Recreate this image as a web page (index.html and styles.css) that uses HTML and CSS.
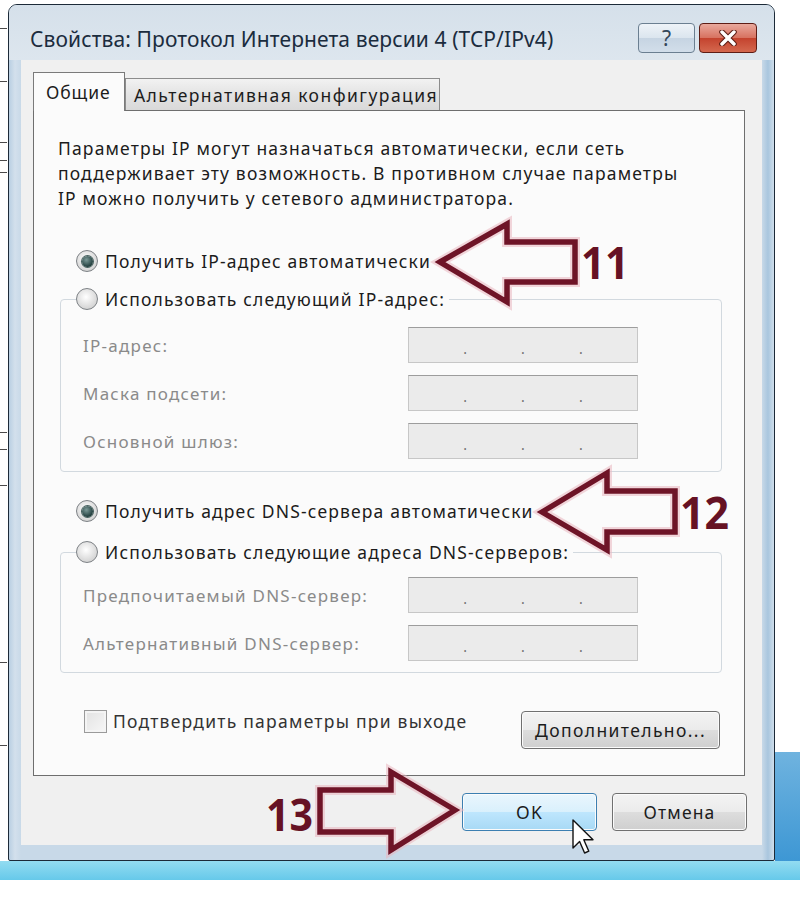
FILE: index.html
```html
<!DOCTYPE html>
<html lang="ru">
<head>
  <meta charset="UTF-8">
  <meta name="viewport" content="width=device-width, initial-scale=1.0">
  <title>Свойства: Протокол Интернета версии 4 (TCP/IPv4)</title>
  <link rel="stylesheet" href="styles.css">
</head>
<body>
  <div class="screen">
    <div class="window">
      <!-- Title bar -->
      <div class="titlebar">
        <span class="title">Свойства: Протокол Интернета версии 4 (TCP/IPv4)</span>
        <div class="caption-buttons">
          <div class="cap-btn help">?</div>
          <div class="cap-btn close">
            <svg width="22" height="16" viewBox="0 0 22 16">
              <path d="M5 2 L17 14 M17 2 L5 14" stroke="#5a1a12" stroke-width="5.5" stroke-linecap="round"/>
              <path d="M5 2 L17 14 M17 2 L5 14" stroke="#ffffff" stroke-width="3.5" stroke-linecap="round"/>
            </svg>
          </div>
        </div>
      </div>

      <div class="client">
        <!-- Tabs -->
        <div class="tabs">
          <div class="tab active">Общие</div>
          <div class="tab">Альтернативная конфигурация</div>
        </div>

        <div class="panel">
          <p class="intro">Параметры IP могут назначаться автоматически, если сеть<br>поддерживает эту возможность. В противном случае параметры<br>IP можно получить у сетевого администратора.</p>

          <div class="option ip-auto">
            <span class="radio checked"></span>
            <span>Получить IP-адрес автоматически</span>
          </div>

          <div class="group ip-group">
            <div class="option legend">
              <span class="radio"></span>
              <span>Использовать следующий IP-адрес:</span>
            </div>
            <div class="fields first">
              <div class="field">
                <span class="label">IP-адрес:</span>
                <div class="ip-box"><i></i><b>.</b><i></i><b>.</b><i></i><b>.</b><i></i></div>
              </div>
              <div class="field">
                <span class="label">Маска подсети:</span>
                <div class="ip-box"><i></i><b>.</b><i></i><b>.</b><i></i><b>.</b><i></i></div>
              </div>
              <div class="field">
                <span class="label">Основной шлюз:</span>
                <div class="ip-box"><i></i><b>.</b><i></i><b>.</b><i></i><b>.</b><i></i></div>
              </div>
            </div>
          </div>

          <div class="option dns-auto">
            <span class="radio checked"></span>
            <span>Получить адрес DNS-сервера автоматически</span>
          </div>

          <div class="group dns-group">
            <div class="option legend">
              <span class="radio"></span>
              <span>Использовать следующие адреса DNS-серверов:</span>
            </div>
            <div class="fields">
              <div class="field">
                <span class="label">Предпочитаемый DNS-сервер:</span>
                <div class="ip-box"><i></i><b>.</b><i></i><b>.</b><i></i><b>.</b><i></i></div>
              </div>
              <div class="field">
                <span class="label">Альтернативный DNS-сервер:</span>
                <div class="ip-box"><i></i><b>.</b><i></i><b>.</b><i></i><b>.</b><i></i></div>
              </div>
            </div>
          </div>

          <div class="panel-footer">
            <div class="check-row">
              <span class="checkbox"></span>
              <span>Подтвердить параметры при выходе</span>
            </div>
            <div class="button wide">Дополнительно...</div>
          </div>
        </div>

        <div class="dialog-buttons">
          <div class="button hover">OK</div>
          <div class="button">Отмена</div>
        </div>
      </div>
    </div>

    <!-- annotation arrows drawn over the screenshot -->
    <svg class="overlay" width="800" height="902" viewBox="0 0 800 902">
      <g fill="none" stroke-linejoin="miter">
        <polygon class="glow" points="440,262 507,224 507,242 575,242 575,282 507,282 507,302"/>
        <polygon class="arrow" points="440,262 507,224 507,242 575,242 575,282 507,282 507,302"/>
        <polygon class="glow" points="542,512 607,473 607,491 675,491 675,532 607,532 607,550"/>
        <polygon class="arrow" points="542,512 607,473 607,491 675,491 675,532 607,532 607,550"/>
        <polygon class="glow" points="455,810 391,772 391,790 320,790 320,832 391,832 391,850"/>
        <polygon class="arrow" points="455,810 391,772 391,790 320,790 320,832 391,832 391,850"/>
      </g>
      <text class="num" x="581" y="279" textLength="48" lengthAdjust="spacingAndGlyphs">11</text>
      <text class="num" x="680" y="529" textLength="49" lengthAdjust="spacingAndGlyphs">12</text>
      <text class="num" x="266" y="831" textLength="47" lengthAdjust="spacingAndGlyphs">13</text>
      <path class="cursor" d="M573 820 L573 848 L579.6 841.5 L584.6 853 L588.8 851.2 L583.8 839.8 L593 839.8 Z"/>
    </svg>
  </div>
</body>
</html>
```

FILE: styles.css
```css
* {
  box-sizing: border-box;
}

body {
  margin: 0;
  background: #ffffff;
  font-family: "Noto Sans", "Open Sans", sans-serif;
  color: #1c1c1c;
}

.screen {
  position: relative;
  width: 800px;
  height: 902px;
  padding: 4px 0 0 8px;
  overflow: hidden;
  background:
    linear-gradient(#93dcf1, #66c9ea) 0 861px / 800px 19px no-repeat,
    linear-gradient(#6fb3df, #3d97d4) 775px 752px / 25px 110px no-repeat,
    linear-gradient(#4a4a4a, #4a4a4a) 0 28px / 7px 1px no-repeat,
    linear-gradient(#4a4a4a, #4a4a4a) 0 81px / 7px 1px no-repeat,
    linear-gradient(#4a4a4a, #4a4a4a) 0 142px / 7px 1px no-repeat,
    linear-gradient(#4a4a4a, #4a4a4a) 0 160px / 7px 1px no-repeat,
    linear-gradient(#4a4a4a, #4a4a4a) 0 172px / 7px 1px no-repeat,
    linear-gradient(#4a4a4a, #4a4a4a) 0 432px / 7px 1px no-repeat,
    linear-gradient(#4a4a4a, #4a4a4a) 0 449px / 7px 1px no-repeat,
    linear-gradient(#4a4a4a, #4a4a4a) 0 485px / 7px 1px no-repeat,
    linear-gradient(#4a4a4a, #4a4a4a) 0 662px / 7px 1px no-repeat,
    linear-gradient(#4a4a4a, #4a4a4a) 0 745px / 7px 1px no-repeat,
    #ffffff;
}

/* window frame */
.window {
  width: 767px;
  height: 857px;
  border: 1px solid #1c2a38;
  border-radius: 9px 9px 2px 2px;
  background: linear-gradient(90deg, #b9cfe2 0, #d3e0ec 6px, #c8d9e8 12px, #c8d9e8 calc(100% - 12px), #a9c6de calc(100% - 6px), #cfdeeb 100%);
  display: flex;
  flex-direction: column;
  padding: 0 12px 15px 12px;
}

.titlebar {
  height: 55px;
  display: flex;
  align-items: flex-start;
  justify-content: space-between;
  margin: 0 -12px;
  padding: 0 17px 0 21px;
  border-radius: 8px 8px 0 0;
  background: linear-gradient(#d5e0ea, #dde6ee);
}

.title {
  margin-top: 20px;
  font-size: 21px;
  color: #1b2c3e;
  letter-spacing: 0.1px;
}

.caption-buttons {
  display: flex;
  gap: 4px;
  margin-top: 18px;
}

.cap-btn {
  height: 30px;
  border-radius: 4px;
  display: flex;
  align-items: center;
  justify-content: center;
}

.help {
  width: 57px;
  border: 1px solid #6b7f91;
  background: linear-gradient(#eef3f8, #dbe5ee 50%, #c6d4e2 51%, #d2deea);
  font-size: 21px;
  color: #34475a;
}

.close {
  width: 58px;
  border: 1px solid #5e1d15;
  background: linear-gradient(#e9a99d, #d7715f 50%, #c4432e 51%, #d4684f);
}

/* client area */
.client {
  flex: 1;
  background: #f0f0f0;
  padding: 12px 17px 14px 12px;
  display: flex;
  flex-direction: column;
  letter-spacing: 1.15px;
}

.tabs {
  height: 38px;
  display: flex;
  align-items: flex-end;
}

.tab {
  height: 32px;
  padding: 0 0 0 8px;
  width: 315px;
  border: 1px solid #8c8c8c;
  border-bottom: none;
  background: linear-gradient(#f2f2f2, #e3e3e3 50%, #d9d9d9);
  font-size: 17.5px;
  line-height: 33px;
  letter-spacing: 1.45px;
  color: #1c1c1c;
}

.tab.active {
  width: 92px;
  height: 39px;
  margin-bottom: -1px;
  padding-left: 12px;
  line-height: 38px;
  letter-spacing: 0.9px;
  background: #fbfbfb;
  border-color: #7a7a7a;
  position: relative;
  z-index: 1;
}

.panel {
  height: 666px;
  background: #fbfbfb;
  border: 1px solid #6e6e6e;
}

.intro {
  margin: 25px 0 0 24px;
  font-size: 17.5px;
  line-height: 25px;
}

.option {
  height: 30px;
  display: flex;
  align-items: center;
  gap: 7px;
  margin-left: 42px;
  font-size: 17.5px;
}

.ip-auto {
  margin-top: 35px;
}

.dns-auto {
  margin-top: 24px;
}

.radio {
  width: 22px;
  height: 22px;
  flex: none;
  border-radius: 50%;
  border: 1px solid #7d8185;
  background: radial-gradient(circle at 45% 40%, #ffffff, #d6d6d6 70%, #c4c4c4);
  display: flex;
  align-items: center;
  justify-content: center;
}

.radio.checked::after {
  content: "";
  width: 11px;
  height: 11px;
  border-radius: 50%;
  background: radial-gradient(circle at 40% 35%, #7c9a98, #23403f 70%);
  box-shadow: 0 0 0 1px #46605e;
}

.group {
  margin-left: 26px;
  width: 662px;
  border: 1px solid #d2d9df;
  border-radius: 4px;
  padding: 0 0 12px 22px;
}

.ip-group {
  margin-top: 23px;
}

.dns-group {
  margin-top: 26px;
  padding-bottom: 11px;
}

.group .legend {
  width: fit-content;
  margin: -16px 0 0 -7px;
  padding-right: 4px;
  background: #fbfbfb;
}

.fields {
  margin-top: 10px;
  display: flex;
  flex-direction: column;
  gap: 12px;
}

.fields.first {
  margin-top: 13px;
}

.field {
  display: grid;
  grid-template-columns: 325px 230px;
  align-items: center;
  height: 36px;
}

.label {
  font-size: 17px;
  color: #8a8a8a;
  letter-spacing: 1.25px;
}

.ip-box {
  height: 36px;
  border: 1px solid #c7c7c7;
  border-top-color: #9d9d9d;
  background: #ebebeb;
  display: grid;
  grid-template-columns: 1fr auto 1fr auto 1fr auto 1fr;
  align-items: center;
  font-size: 14px;
  letter-spacing: 0;
  color: #707070;
}

.ip-box b {
  font-weight: normal;
  margin-top: 6px;
}

.panel-footer {
  margin: 38px 24px 0 50px;
  display: flex;
  justify-content: space-between;
  align-items: flex-start;
}

.check-row {
  margin-top: -2px;
  display: flex;
  align-items: center;
  gap: 6px;
  font-size: 17.5px;
  letter-spacing: 1.25px;
  color: #333;
}

.checkbox {
  width: 23px;
  height: 23px;
  border: 1px solid #9a9a9a;
  background: linear-gradient(135deg, #e2e2e2, #f7f7f7);
  box-shadow: inset 0 0 0 2px #f4f4f4;
}

.button {
  width: 135px;
  height: 38px;
  border: 1px solid #707070;
  border-radius: 4px;
  background: linear-gradient(#f3f3f3, #ebebeb 50%, #dddddd 51%, #cfcfcf);
  box-shadow: inset 0 0 0 1px #fbfbfb;
  display: flex;
  align-items: center;
  justify-content: center;
  font-size: 17.5px;
  color: #1c1c1c;
}

.button.wide {
  width: 199px;
  letter-spacing: 1.4px;
}

.button.hover {
  border-color: #3c7fb1;
  background: linear-gradient(#eaf6fd, #d9f0fc 50%, #bee6fd 51%, #a7d9f5);
}

.dialog-buttons {
  margin: 17px -2px 0 0;
  display: flex;
  justify-content: flex-end;
  gap: 15px;
}

/* annotations */
.overlay {
  position: absolute;
  top: 0;
  left: 0;
  pointer-events: none;
}

.glow {
  stroke: #e9b7c0;
  stroke-width: 10;
  opacity: 0.55;
}

.arrow {
  stroke: #6e1427;
  stroke-width: 5.5;
}

.num {
  font-family: "Open Sans", "Noto Sans", sans-serif;
  font-weight: bold;
  font-size: 44px;
  fill: #661224;
}

.cursor {
  fill: #ffffff;
  stroke: #111111;
  stroke-width: 1.4;
  stroke-linejoin: round;
}
```
